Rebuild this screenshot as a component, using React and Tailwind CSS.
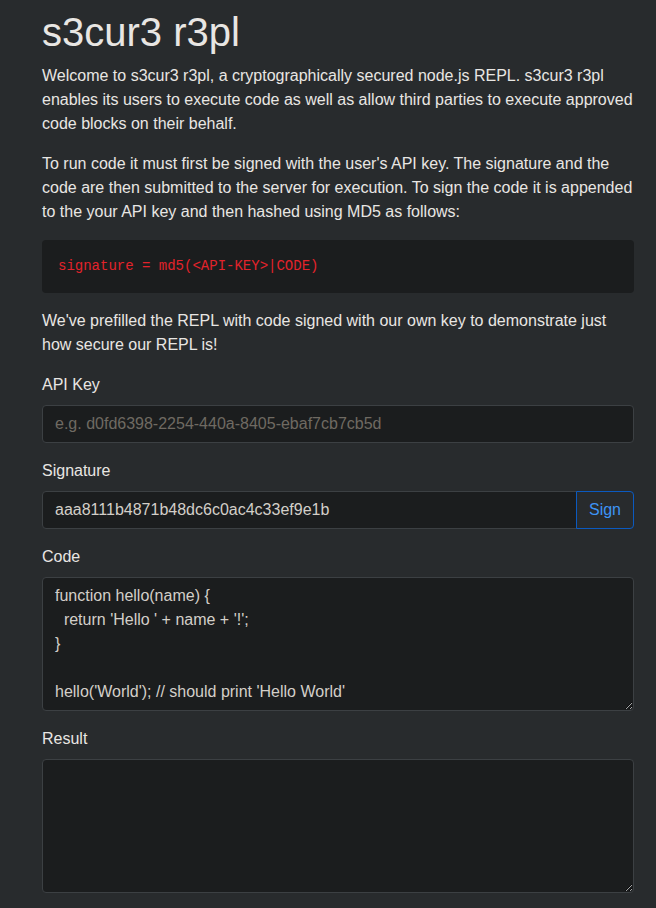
import { useState } from 'react';

const codeSample = `function hello(name) {
  return 'Hello ' + name + '!';
}

hello('World'); // should print 'Hello World'`;

const App = () => {
  const [apiKey, setApiKey] = useState('');
  const [signature, setSignature] = useState('aaa8111b4871b48dc6c0ac4c33ef9e1b');
  const [code, setCode] = useState(codeSample);
  const [result, setResult] = useState('');

  const inputClass =
    'w-full h-[38px] px-3 bg-[#1b1d1e] border border-[#3c4043] text-[#d3cfc9] text-base placeholder-[#6f6a62] focus:outline-none';

  return (
    <div className="min-h-screen bg-[#282b2d] text-[#e8e6e3] font-['Liberation_Sans',Arial,sans-serif] text-base leading-6">
      <div className="w-[592px] ml-[42px] pt-2 pb-6">

        {/* Header */}
        <h1 className="text-[40px] leading-[48px] font-normal mb-2">s3cur3 r3pl</h1>
        <p className="mb-4">
          Welcome to s3cur3 r3pl, a cryptographically secured node.js REPL. s3cur3 r3pl
          enables its users to execute code as well as allow third parties to execute approved
          code blocks on their behalf.
        </p>
        <p className="mb-4">
          To run code it must first be signed with the user's API key. The signature and the
          code are then submitted to the server for execution. To sign the code it is appended
          to the your API key and then hashed using MD5 as follows:
        </p>

        {/* Formula */}
        <pre className="bg-[#1b1d1e] rounded px-4 py-4 mb-4 font-['Liberation_Mono',monospace] text-sm leading-[21px] text-[#e3232b]">
          signature = md5(&lt;API-KEY&gt;|CODE)
        </pre>

        <p className="mb-4">
          We've prefilled the REPL with code signed with our own key to demonstrate just
          how secure our REPL is!
        </p>

        {/* API Key */}
        <div className="mb-4">
          <label className="block mb-2">API Key</label>
          <input
            type="text"
            value={apiKey}
            onChange={(e) => setApiKey(e.target.value)}
            placeholder="e.g. d0fd6398-2254-440a-8405-ebaf7cb7cb5d"
            className={inputClass + ' rounded'}
          />
        </div>

        {/* Signature */}
        <div className="mb-4">
          <label className="block mb-2">Signature</label>
          <div className="flex">
            <input
              type="text"
              value={signature}
              onChange={(e) => setSignature(e.target.value)}
              className={inputClass + ' rounded-l'}
            />
            <button className="h-[38px] w-[58px] shrink-0 -ml-px border border-[#0b5ac0] rounded-r text-[#3d94f6] bg-transparent">
              Sign
            </button>
          </div>
        </div>

        {/* Code */}
        <div className="mb-4">
          <label className="block mb-2">Code</label>
          <textarea
            rows={5}
            value={code}
            onChange={(e) => setCode(e.target.value)}
            className="block w-full h-[134px] px-3 py-[6px] bg-[#1b1d1e] border border-[#3c4043] rounded text-[#d3cfc9] text-base leading-6 focus:outline-none"
          />
        </div>

        {/* Result */}
        <div className="mb-4">
          <label className="block mb-2">Result</label>
          <textarea
            rows={5}
            value={result}
            onChange={(e) => setResult(e.target.value)}
            className="block w-full h-[134px] px-3 py-[6px] bg-[#1b1d1e] border border-[#3c4043] rounded text-[#d3cfc9] text-base leading-6 focus:outline-none"
          />
        </div>

      </div>
    </div>
  );
};

export default App;
